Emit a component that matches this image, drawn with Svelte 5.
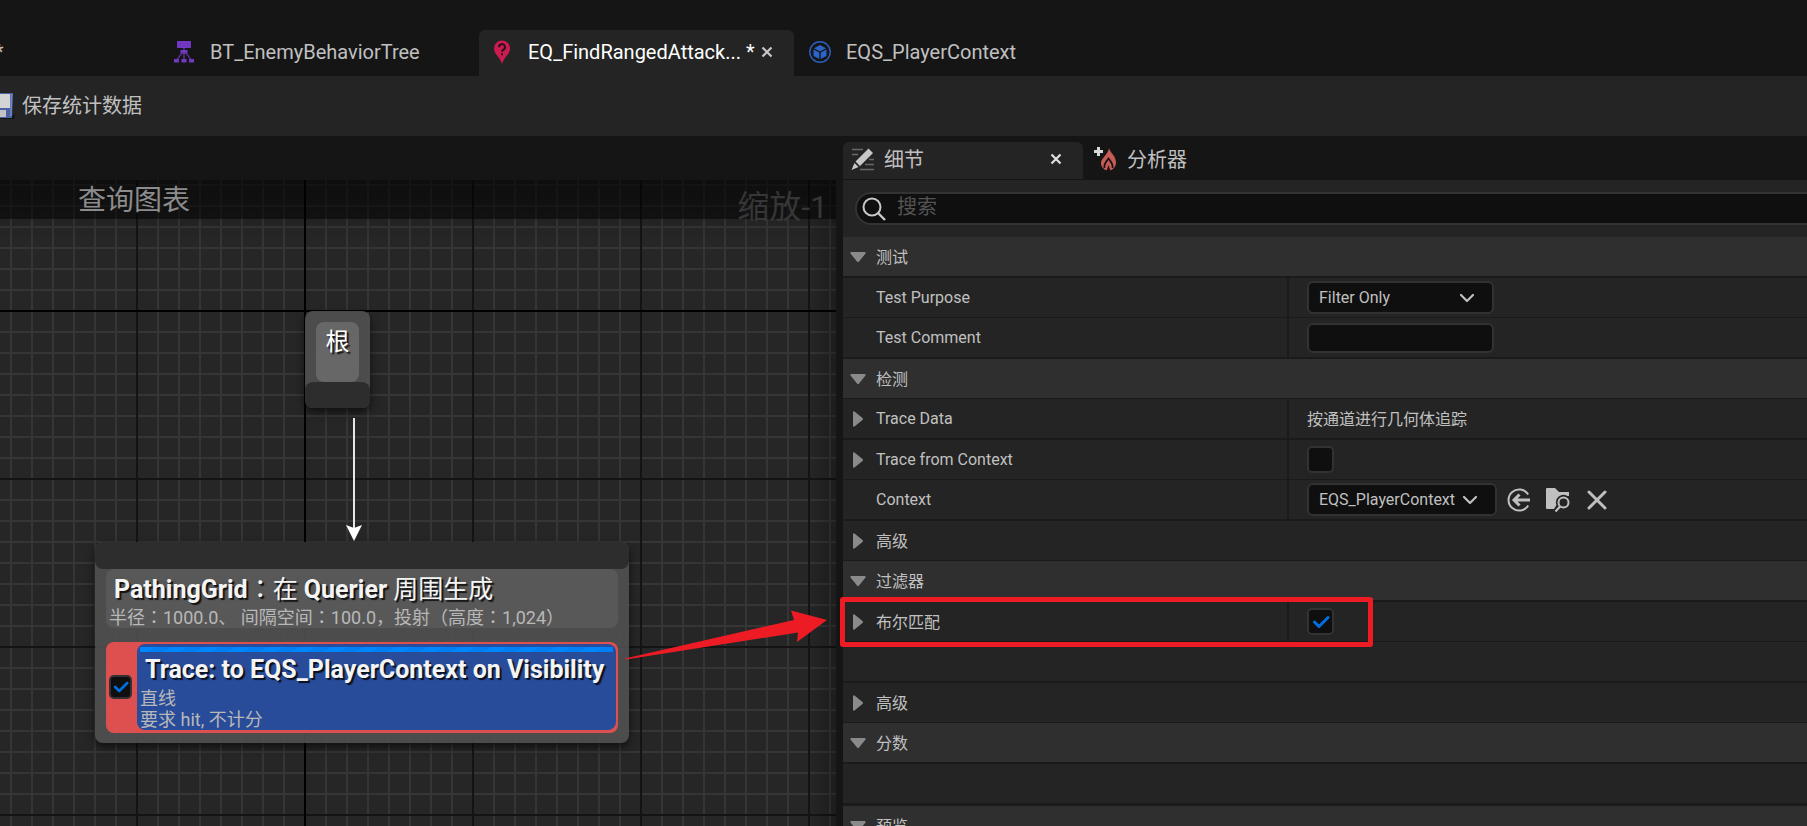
<script>
  let purpose = $state('Filter Only');
  let comment = $state('');
  let context = $state('EQS_PlayerContext');
  let search = $state('');
  let fromContext = $state(false);
  let boolMatch = $state(true);
  let testEnabled = $state(true);

  const rows = [
    { kind: 'head', label: '测试' },
    { kind: 'prop', label: 'Test Purpose', value: 'purpose', id: 'purpose' },
    { kind: 'prop', label: 'Test Comment', value: 'comment', id: 'comment' },
    { kind: 'head', label: '检测' },
    { kind: 'prop', label: 'Trace Data', value: 'trace', closed: true },
    { kind: 'prop', label: 'Trace from Context', value: 'from', id: 'from', closed: true },
    { kind: 'prop', label: 'Context', value: 'context', id: 'context' },
    { kind: 'advanced', label: '高级' },
    { kind: 'head', label: '过滤器' },
    { kind: 'prop', label: '布尔匹配', value: 'bool', id: 'bool', closed: true, marked: true },
    { kind: 'empty' },
    { kind: 'advanced', label: '高级' },
    { kind: 'head', label: '分数' },
    { kind: 'empty' },
    { kind: 'head', label: '预览' }
  ];

  const isLatin = (label) => /^[\x20-\x7e]+$/.test(label);
</script>

{#snippet cross(size)}
  <svg width={size} height={size} viewBox="0 0 12 12" aria-hidden="true">
    <path d="M1.5 1.5 10.5 10.5M10.5 1.5 1.5 10.5" stroke="currentColor" stroke-width="2.2" fill="none" />
  </svg>
{/snippet}

{#snippet chevron()}
  <svg class="chevron" width="16" height="10" viewBox="0 0 16 10" aria-hidden="true">
    <path d="M2 2 8 8 14 2" stroke="currentColor" stroke-width="2.2" fill="none" stroke-linecap="round" stroke-linejoin="round" />
  </svg>
{/snippet}

{#snippet tick()}
  <svg class="tick" viewBox="0 0 18 18" aria-hidden="true">
    <path d="M2.5 9 7 13.5 16 4.5" stroke="#0070e0" stroke-width="3" fill="none" stroke-linecap="round" stroke-linejoin="round" />
  </svg>
{/snippet}

<div class="editor">
  <nav class="tabs">
    <button class="tab first">*</button>
    <button class="tab">
      <svg width="22" height="24" viewBox="0 0 22 24" aria-hidden="true">
        <g fill="#7038c0">
          <path d="M4 1h14v7H4zM7.500 10h7v3.500h-7zM1 19h5v3.500H1zM8.500 19h5v3.500h-5zM16 19h5v3.500h-5z" />
        </g>
        <path d="M11 7v13M9.500 12.500 3.500 20M12.500 12.500 18.500 20" stroke="#7038c0" stroke-width="1.200" fill="none" />
      </svg>
      <span>BT_EnemyBehaviorTree</span>
    </button>
    <div class="tab active">
      <svg width="22" height="24" viewBox="0 0 22 24" aria-hidden="true">
        <path d="M11 0.500a8 8 0 0 1 8 8c0 3-1.500 5-3.500 7.500C13.500 18.500 12 21 11 24c-1-3-2.500-5.500-4.500-8C4.500 13.500 3 11.500 3 8.500a8 8 0 0 1 8-8z" fill="#cb1b50" />
        <path d="M8 7.200a3 3 0 1 1 4.500 2.500c-1.100.7-1.500 1.100-1.500 2.100M11 13.300v2" stroke="#2a1219" stroke-width="2" fill="none" />
      </svg>
      <span>EQ_FindRangedAttack...</span>
      <span class="star">*</span>
      <button class="close" aria-label="Close tab">{@render cross(12)}</button>
    </div>
    <button class="tab">
      <svg width="22" height="24" viewBox="0 0 22 24" aria-hidden="true">
        <circle cx="11" cy="12" r="10.200" fill="none" stroke="#2c5fbc" stroke-width="1.400" />
        <path d="M11 5 17 8.200 11 11.400 5 8.200zM4.500 9.500 10.300 12.600V19L4.500 15.900zM17.500 9.500 11.700 12.600V19L17.500 15.900z" fill="#2c63c8" />
      </svg>
      <span>EQS_PlayerContext</span>
    </button>
  </nav>

  <header class="toolbar">
    <button class="save">
      <svg width="15" height="28" viewBox="14 0 15 28" aria-hidden="true">
        <path d="M14 25h12l3-4-1 6H14z" fill="#111" />
        <path d="M14 1h13l-1 25H14z" fill="#4c62a0" />
        <path d="M24.500 2h2l-.8 22h-1.600z" fill="#6d86c4" />
        <path d="M14 2h10v14H14z" fill="#d4d4d6" />
        <path d="M14 18h6v7h-6z" fill="#c3c3c6" />
      </svg>
      <span>保存统计数据</span>
    </button>
  </header>

  <main class="body">
    <section class="graph" aria-label="查询图表">
      <div class="canvas">
        <div class="shade"></div>
        <div class="node root">
          <div class="root-title">根</div>
          <div class="pin"></div>
        </div>
        <svg class="wire" width="20" height="124" viewBox="0 0 20 124" aria-hidden="true">
          <path d="M10 0V110" stroke="#e6e6e6" stroke-width="2" />
          <path d="M2 107 10 110 18 107 10 123z" fill="#fff" />
        </svg>
        <div class="node generator">
          <div class="pin"></div>
          <div class="gen-title">
            <h2>PathingGrid<span class="cjk"><span class="mid">：</span>在</span> Querier <span class="cjk">周围生成</span></h2>
            <p>半径<span class="mid">：</span>1000.0<span class="mid">、</span> 间隔空间<span class="mid">：</span>100.0<span class="mid">，</span>投射<span class="mid">（</span>高度<span class="mid">：</span>1,024<span class="mid">）</span></p>
          </div>
          <div class="test">
            <label class="box small">
              <input type="checkbox" bind:checked={testEnabled} aria-label="Enable test" />
              {#if testEnabled}{@render tick()}{/if}
            </label>
            <div class="test-body">
              <div class="weight"></div>
              <h2>Trace: to EQS_PlayerContext on Visibility</h2>
              <p>直线</p>
              <p>要求 hit, 不计分</p>
            </div>
          </div>
        </div>
      </div>
      <div class="graph-title">
        <h1>查询图表</h1>
        <span class="zoom">缩放-1</span>
      </div>
      <svg class="pointer" width="206" height="36" viewBox="0 0 206 36" aria-hidden="true">
        <path d="M0 49.500 169 11 166 1.500 202 11 172 33 173 23.500 1 50.500z" fill="#ed1c24" />
      </svg>
    </section>

    <section class="details">
      <div class="panel-tabs">
        <div class="panel-tab on">
          <svg width="24" height="24" viewBox="0 0 24 24" aria-hidden="true">
            <path d="M1 2.500h11M1 7.500h6M18 12.500h5M14 17.500h9M9 22.500h14" stroke="#686868" stroke-width="1.600" />
            <path d="M17.500 1.500 22 6 9 19 4.500 14.500zM3.500 16 7.500 20 0.500 23z" fill="#c8c8c8" />
          </svg>
          <span>细节</span>
          <button class="close" aria-label="Close panel">{@render cross(12)}</button>
        </div>
        <button class="panel-tab">
          <svg width="24" height="24" viewBox="0 0 24 24" aria-hidden="true">
            <path d="M16 1c.5 4 7 8 7 14.500 0 4-2.500 7-6 8H14c-3.500-1-6-4-6-7.500C8 11 15 8 16 1z" fill="#c75c57" />
            <path d="M11.500 21c-1-4 1.500-6 4-9.500 2.500 3.500 5 5.500 4 9.500" fill="none" stroke="#1c1214" stroke-width="1.800" />
            <path d="M13.500 24 15.500 18 17.500 24z" fill="#1c1214" />
            <path d="M4 0h3v3h3v3H7v3H4V6H1V3h3z" fill="#d8d8d8" />
          </svg>
          <span>分析器</span>
        </button>
      </div>

      <label class="search">
        <svg width="24" height="24" viewBox="0 0 24 24" aria-hidden="true">
          <circle cx="10" cy="10" r="8.500" fill="none" stroke="#c8c8c8" stroke-width="2" />
          <path d="M16 16 23 23" stroke="#c8c8c8" stroke-width="2.400" />
        </svg>
        <input type="text" placeholder="搜索" aria-label="搜索" bind:value={search} />
      </label>

      <div class="rows">
        {#each rows as row}
          <div class="row {row.kind}">
            {#if row.kind !== 'empty'}
              <div class="name" class:han={!isLatin(row.label)}>
                <span class="arrow">
                  {#if row.kind === 'head'}
                    <svg width="16" height="10" viewBox="0 0 16 10" aria-hidden="true"><path d="M1 0h14q1 .5.500 1.500L9 9.500q-1 1-2 0L.5 1.500Q0 .5 1 0z" fill="#8a8a8a" /></svg>
                  {:else if row.closed || row.kind === 'advanced'}
                    <svg width="10" height="16" viewBox="0 0 10 16" aria-hidden="true"><path d="M0 1v14q.5 1 1.500.5L9.500 9q1-1 0-2L1.500.5Q.5 0 0 1z" fill="#8a8a8a" /></svg>
                  {/if}
                </span>
                {#if row.id}<label for={row.id}>{row.label}</label>{:else}<span>{row.label}</span>{/if}
              </div>
            {/if}
            {#if row.kind === 'prop'}
              <div class="value">
                {#if row.value === 'purpose'}
                  <span class="select">
                    <select id="purpose" bind:value={purpose}>
                      <option>Filter Only</option>
                      <option>Score Only</option>
                      <option>Filter and Score</option>
                    </select>
                    {@render chevron()}
                  </span>
                {:else if row.value === 'comment'}
                  <input id="comment" class="text" type="text" bind:value={comment} />
                {:else if row.value === 'trace'}
                  <span class="trace">按通道进行几何体追踪</span>
                {:else if row.value === 'from'}
                  <span class="box">
                    <input id="from" type="checkbox" bind:checked={fromContext} />
                    {#if fromContext}{@render tick()}{/if}
                  </span>
                {:else if row.value === 'context'}
                  <span class="select context">
                    <select id="context" bind:value={context}>
                      <option>EQS_PlayerContext</option>
                    </select>
                    {@render chevron()}
                  </span>
                  <button class="icon" aria-label="Use selected asset">
                    <svg width="24" height="24" viewBox="0 0 24 24" aria-hidden="true">
                      <path d="M21.200 6.500A10.600 10.600 0 1 0 21.200 17.500" stroke="currentColor" stroke-width="2" fill="none" />
                      <path d="M23 12H8M12.500 6.500 7 12l5.500 5.500" stroke="currentColor" stroke-width="3" fill="none" />
                    </svg>
                  </button>
                  <button class="icon" aria-label="Browse to asset">
                    <svg width="24" height="24" viewBox="0 0 24 24" aria-hidden="true">
                      <path d="M1 0h8l4 4h10v4h-1.500a7.500 7.500 0 0 0-11 9L8 21H1q-1 0-1-1V1q0-1 1-1z" fill="currentColor" />
                      <circle cx="17.500" cy="14.500" r="5" fill="none" stroke="currentColor" stroke-width="2" />
                      <path d="M14 18.500 9.500 23.500" stroke="currentColor" stroke-width="2.200" />
                    </svg>
                  </button>
                  <button class="icon" aria-label="Clear">
                    <svg width="24" height="24" viewBox="0 0 24 24" aria-hidden="true">
                      <path d="M4 4 20 20M20 4 4 20" stroke="currentColor" stroke-width="3" stroke-linecap="round" />
                    </svg>
                  </button>
                {:else}
                  <span class="box">
                    <input id="bool" type="checkbox" bind:checked={boolMatch} />
                    {#if boolMatch}{@render tick()}{/if}
                  </span>
                {/if}
              </div>
            {/if}
            {#if row.marked}<div class="mark"></div>{/if}
          </div>
        {/each}
      </div>
    </section>
  </main>
</div>

<style>
  :global(body) {
    background: #151515;
    overflow: hidden;
  }

  .editor {
    display: flex;
    flex-direction: column;
    height: 100vh;
    overflow: hidden;
    background: #151515;
    color: #c0c0c0;
    font-family: Roboto, 'Noto Sans CJK SC', sans-serif;
    font-size: 16px;
  }

  .editor * {
    box-sizing: border-box;
  }

  button,
  input,
  select {
    font: inherit;
    color: inherit;
    background: none;
    border: 0;
    padding: 0;
    margin: 0;
    outline: none;
  }

  h1,
  h2,
  p {
    margin: 0;
    font-weight: 400;
  }

  svg {
    display: block;
    flex: none;
  }

  .tabs {
    display: flex;
    flex: none;
    gap: 3px;
    padding-top: 30px;
    font-size: 20px;
  }

  .tab {
    display: flex;
    align-items: center;
    flex: none;
    width: 315px;
    height: 46px;
    padding: 0 12px 2px;
    white-space: nowrap;
  }

  .tab svg + span {
    margin-left: 15px;
  }

  .tab.first {
    width: 158px;
    padding: 0 0 2px;
    text-indent: -5px;
  }

  .tab.active {
    background: #242424;
    border-radius: 6px 6px 0 0;
    color: #fff;
  }

  .star {
    margin-left: 5px;
  }

  .close {
    color: #c8c8c8;
    margin-left: 6px;
  }

  .toolbar {
    display: flex;
    align-items: center;
    flex: none;
    height: 60px;
    background: #242424;
    font-size: 20px;
  }

  .save {
    display: flex;
    align-items: center;
    gap: 7px;
  }

  .save span {
    padding-bottom: 4px;
  }

  .body {
    display: grid;
    grid-template-columns: 836fr 964fr;
    gap: 7px;
    flex: 1;
    min-height: 0;
  }

  .graph {
    position: relative;
    margin-top: 44px;
    min-width: 0;
  }

  .canvas {
    position: absolute;
    inset: 0;
    overflow: hidden;
    background-color: #262626;
    background-image:
      linear-gradient(#000, #000),
      linear-gradient(#000, #000),
      repeating-linear-gradient(90deg, #141414 0 2px, transparent 2px 168px),
      repeating-linear-gradient(#141414 0 2px, transparent 2px 168px),
      repeating-linear-gradient(90deg, #353535 0 2px, transparent 2px 21px),
      repeating-linear-gradient(#353535 0 2px, transparent 2px 21px);
    background-size:
      2px 100%,
      100% 2px,
      1680px 100%,
      100% 1680px,
      1680px 100%,
      100% 1680px;
    background-position:
      304px 0,
      0 130px,
      -32px 0,
      0 -38px,
      -32px 0,
      0 -38px;
    background-repeat: no-repeat, no-repeat, repeat, repeat, repeat, repeat;
  }

  .graph-title {
    position: absolute;
    inset: 0 0 auto 0;
    display: flex;
    justify-content: space-between;
    height: 39px;
    padding: 0 8px 0 78px;
    background: rgba(0, 0, 0, 0.5);
    white-space: nowrap;
  }

  h1 {
    font-size: 28px;
    line-height: 41px;
    color: #8c8c8c;
  }

  .zoom {
    font-size: 32px;
    line-height: 54px;
    color: #363636;
  }

  .shade {
    position: absolute;
    inset: 0;
    pointer-events: none;
    background:
      linear-gradient(270deg, rgba(0, 0, 0, 0.25), transparent 30px),
      linear-gradient(rgba(0, 0, 0, 0.25), transparent 60px);
  }

  .node {
    position: absolute;
    border-radius: 8px;
    background: rgba(79, 79, 79, 0.92);
    box-shadow: 0 4px 8px rgba(0, 0, 0, 0.6);
    padding: 0 11px;
  }

  .pin {
    margin: 0 -11px;
    border-radius: 8px;
    background: #2d2d2d;
  }

  .root {
    left: 305px;
    top: 131px;
    width: 65px;
    padding-top: 11px;
  }

  .root .pin {
    height: 26px;
  }

  .root-title {
    height: 60px;
    border-radius: 8px;
    background: #676767;
    color: #fff;
    font-size: 24px;
    line-height: 40px;
    text-align: center;
    text-shadow: 2px 2px 1px rgba(0, 0, 0, 0.8);
  }

  .wire {
    position: absolute;
    left: 344px;
    top: 238px;
  }

  .generator {
    left: 95px;
    top: 362px;
    width: 534px;
    padding-bottom: 10px;
    white-space: nowrap;
  }

  .generator .pin {
    height: 27px;
  }

  .gen-title {
    height: 59px;
    padding-left: 3px;
    border-radius: 8px;
    background: #585858;
  }

  .gen-title p {
    line-height: 16px;
  }

  h2 {
    padding-left: 5px;
    font-size: 25px;
    font-weight: 700;
    line-height: 36px;
    color: #f4f4f4;
    text-shadow: 2px 2px 1px rgba(0, 0, 0, 0.8);
  }

  .cjk {
    font-weight: 400;
  }

  .mid {
    font-family: 'Noto Sans CJK JP', sans-serif;
  }

  p {
    font-size: 18px;
    line-height: 21px;
    color: #b8b8b8;
  }

  .test {
    display: flex;
    align-items: center;
    gap: 5px;
    height: 91px;
    margin-top: 14px;
    padding: 2px 2px 3px 3px;
    border-radius: 8px;
    background: #de5050;
  }

  .test-body {
    flex: 1;
    align-self: stretch;
    padding: 3px 3px 0;
    border-radius: 8px;
    background: #284c9a;
  }

  .weight {
    height: 5px;
    background: repeating-linear-gradient(150deg, #0086ff 0 8px, #007ef4 8px 16px);
  }

  .pointer {
    position: absolute;
    left: 625px;
    top: 429px;
    overflow: visible;
  }

  .box {
    position: relative;
    display: grid;
    place-items: center;
    flex: none;
    width: 27px;
    height: 27px;
    border: 2px solid #323232;
    border-radius: 5px;
    background: #0f0f0f;
  }

  .box input {
    position: absolute;
    inset: 0;
    appearance: none;
  }

  .box.small {
    width: 23px;
    height: 24px;
  }

  .tick {
    width: 18px;
    height: 18px;
    pointer-events: none;
  }

  .small .tick {
    width: 16px;
    height: 16px;
  }

  .details {
    display: flex;
    flex-direction: column;
    min-width: 0;
    padding-top: 6px;
  }

  .panel-tabs {
    display: flex;
    flex: none;
    font-size: 20px;
    padding-bottom: 1px;
  }

  .panel-tab {
    display: flex;
    align-items: center;
    gap: 10px;
    height: 37px;
    padding: 0 10px;
    padding-bottom: 4px;
  }

  .panel-tab.on {
    width: 240px;
    padding-left: 8px;
    padding-right: 21px;
    gap: 9px;
    border-radius: 6px 6px 0 0;
    background: #242424;
  }

  .panel-tab .close {
    margin-left: auto;
    color: #e0e0e0;
  }

  .search {
    display: flex;
    align-items: center;
    gap: 12px;
    flex: none;
    height: 57px;
    padding-left: 12px;
    position: relative;
    background: #242424;
  }

  .search svg {
    position: absolute;
    left: 19px;
  }

  .search input {
    flex: 1;
    height: 33px;
    padding: 0 0 3px 40px;
    border: 2px solid #333;
    border-right: 0;
    border-radius: 16px 0 0 16px;
    background: #0f0f0f;
    font-size: 20px;
  }

  .search input::placeholder {
    color: #545454;
    opacity: 1;
  }

  .rows {
    flex: 1;
  }

  .row {
    position: relative;
    display: grid;
    grid-template-columns: 444fr 520fr;
    height: 41px;
    border-bottom: 2px solid #1a1a1a;
    background: #242424;
  }

  .row:nth-child(even) {
    height: 40px;
    border-bottom-width: 1px;
  }

  .row:nth-child(14) {
    height: 42px;
    border-bottom-width: 3px;
  }

  .row.head {
    background: #2f2f2f;
  }

  .name {
    display: flex;
    align-items: center;
    gap: 10px;
    padding-left: 6px;
  }

  .han label,
  .han span:last-child,
  .trace {
    padding-bottom: 2px;
  }

  .arrow {
    display: grid;
    place-items: center;
    width: 17px;
  }

  .value {
    display: flex;
    align-items: center;
    padding-left: 18px;
    border-left: 2px solid #1a1a1a;
  }

  .select {
    position: relative;
    display: flex;
    align-items: center;
    width: 187px;
  }

  .select.context {
    width: 190px;
    margin-right: 10px;
  }

  select,
  .text {
    width: 100%;
    height: 33px;
    padding: 0 10px;
    border: 2px solid #323232;
    border-radius: 6px;
    background: #0f0f0f;
    appearance: none;
  }

  .text {
    width: 187px;
    height: 30px;
  }

  .chevron {
    position: absolute;
    right: 19px;
    pointer-events: none;
  }

  .icon {
    margin-right: 15px;
  }

  .mark {
    position: absolute;
    left: -3px;
    top: -5px;
    width: 533px;
    height: 50px;
    border: 5px solid #ed1c24;
    border-radius: 3px;
    pointer-events: none;
    z-index: 1;
  }
</style>
